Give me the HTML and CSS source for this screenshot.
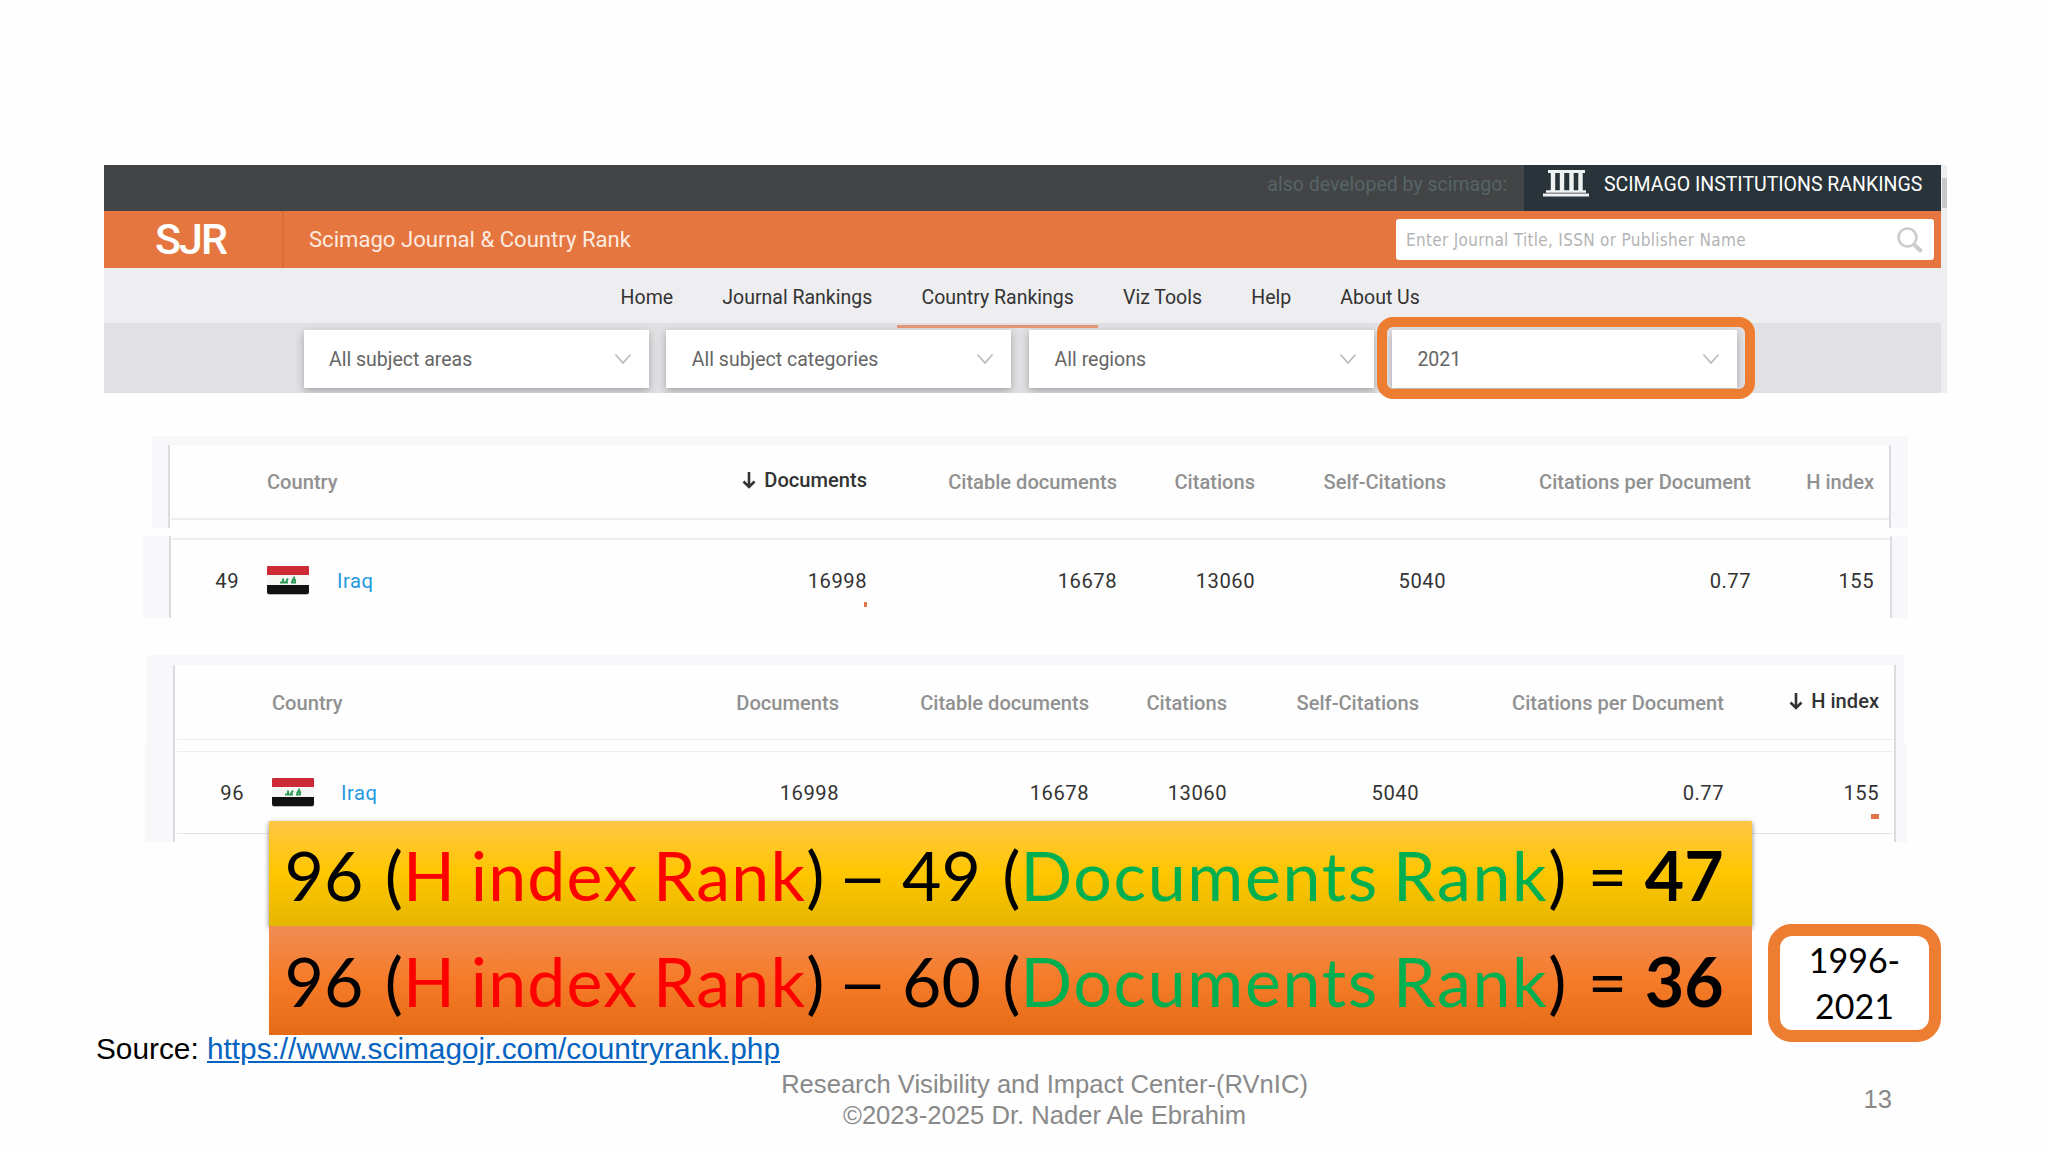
FILE: index.html
```html
<!DOCTYPE html>
<html>
<head>
    <meta charset="UTF-8">
    <title>Scimago Journal &amp; Country Rank</title>
    <link rel="stylesheet" href="styles.css">
</head>
<body>
<div class="slide">
    <!-- site header -->
    <div class="site">
        <div class="topbar">
            <span class="also">also developed by scimago:</span>
            <div class="sir">
                <svg class="sir-icon" width="46" height="27" viewBox="0 0 46 27">
                    <path d="M5 1.500h37M0 25h46" stroke="#eef2f3" stroke-width="3" fill="none"/>
                    <path d="M3 21.500h40" stroke="#eef2f3" stroke-width="2.400" fill="none"/>
                    <path d="M10 3v18M19 3v18M28.500 3v18M37.500 3v18" stroke="#eef2f3" stroke-width="4.400" fill="none"/>
                </svg>
                <span>SCIMAGO INSTITUTIONS RANKINGS</span>
            </div>
        </div>
        <div class="brand">
            <div class="logo">SJR</div>
            <div class="brand-name">Scimago Journal &amp; Country Rank</div>
            <div class="search">
                <span>Enter Journal Title, ISSN or Publisher Name</span>
                <svg width="28" height="26" viewBox="0 0 28 26">
                    <circle cx="11.500" cy="10.500" r="9" fill="none" stroke="#ccc" stroke-width="2.600"/>
                    <path d="M17.500 17l8 7.500" stroke="#ccc" stroke-width="4"/>
                </svg>
            </div>
        </div>
        <div class="nav">
            <a>Home</a>
            <a>Journal Rankings</a>
            <a class="active">Country Rankings</a>
            <a>Viz Tools</a>
            <a>Help</a>
            <a>About Us</a>
        </div>
        <div class="filters">
            <div class="select"><span>All subject areas</span><svg width="18" height="12" viewBox="0 0 18 12"><path d="M1.500 1.500l7.500 8.500 7.500-8.500"/></svg></div>
            <div class="select"><span>All subject categories</span><svg width="18" height="12" viewBox="0 0 18 12"><path d="M1.500 1.500l7.500 8.500 7.500-8.500"/></svg></div>
            <div class="select"><span>All regions</span><svg width="18" height="12" viewBox="0 0 18 12"><path d="M1.500 1.500l7.500 8.500 7.500-8.500"/></svg></div>
            <div class="select"><span>2021</span><svg width="18" height="12" viewBox="0 0 18 12"><path d="M1.500 1.500l7.500 8.500 7.500-8.500"/></svg></div>
        </div>
        <div class="scrollbar"></div>
        <div class="mark-year"></div>
    </div>

    <!-- sorted by documents -->
    <div class="strip head-docs">
        <div class="sheet cols">
            <span></span><span class="left">Country</span><span></span>
            <span class="sorted"><svg width="14" height="18" viewBox="0 0 14 18"><path d="M7 1v15M1.500 10.500l5.500 5.500 5.500-5.500"/></svg>Documents</span>
            <span>Citable documents</span><span>Citations</span><span>Self-Citations</span><span>Citations per Document</span><span>H index</span>
        </div>
    </div>
    <div class="strip row-docs">
        <div class="sheet cols">
            <span>49</span>
            <span class="left"><svg class="flag" width="42" height="29" viewBox="0 0 42 29"><rect y="1" width="42" height="28" rx="2" fill="#bbb"/><rect width="42" height="28" rx="2" fill="#111"/><path d="M0 10V2q0-2 2-2h38q2 0 2 2v8z" fill="#cd2a35"/><path d="M0 9h42v10H0z" fill="#f6f6f4"/><path d="M13 16.500h8M16 15.500v-3M19 15.500l2-3M24 16.500h5M25 15.500l2-3.500 1.500 3.500" stroke="#2c9c58" stroke-width="2" fill="none"/></svg></span>
            <span class="left country">Iraq</span>
            <span>16998<i class="bar"></i></span><span>16678</span><span>13060</span><span>5040</span><span>0.77</span><span>155</span>
        </div>
    </div>

    <!-- sorted by h index -->
    <div class="strip head-h">
        <div class="sheet cols cols-h">
            <span></span><span class="left">Country</span><span></span>
            <span>Documents</span><span>Citable documents</span><span>Citations</span><span>Self-Citations</span><span>Citations per Document</span>
            <span class="sorted"><svg width="14" height="18" viewBox="0 0 14 18"><path d="M7 1v15M1.500 10.500l5.500 5.500 5.500-5.500"/></svg>H index</span>
        </div>
    </div>
    <div class="strip row-h">
        <div class="sheet cols cols-h">
            <span>96</span>
            <span class="left"><svg class="flag" width="42" height="29" viewBox="0 0 42 29"><rect y="1" width="42" height="28" rx="2" fill="#bbb"/><rect width="42" height="28" rx="2" fill="#111"/><path d="M0 10V2q0-2 2-2h38q2 0 2 2v8z" fill="#cd2a35"/><path d="M0 9h42v10H0z" fill="#f6f6f4"/><path d="M13 16.500h8M16 15.500v-3M19 15.500l2-3M24 16.500h5M25 15.500l2-3.500 1.500 3.500" stroke="#2c9c58" stroke-width="2" fill="none"/></svg></span>
            <span class="left country">Iraq</span>
            <span>16998</span><span>16678</span><span>13060</span><span>5040</span><span>0.77</span><span>155<i class="bar bar-h"></i></span>
        </div>
    </div>

    <!-- rank differences, laid over the last table row -->
    <div class="formulas">
        <div class="formula gold"><p>96 (<em>H index Rank</em>)<i class="dash"> – </i>49 (<u>Documents Rank</u>) = <strong>47</strong></p></div>
        <div class="formula orange"><p>96 (<em>H index Rank</em>)<i class="dash"> – </i>60 (<u>Documents Rank</u>) = <strong>36</strong></p></div>
    </div>
    <div class="years">1996-<br>2021</div>

    <p class="source">Source: <a href="https://www.scimagojr.com/countryrank.php">https://www.scimagojr.com/countryrank.php</a></p>
    <div class="footer">
        <p>Research Visibility and Impact Center-(RVnIC)<br>©2023-2025 Dr. Nader Ale Ebrahim</p>
        <span class="page">13</span>
    </div>
</div>
</body>
</html>
```
FILE: styles.css
```css
* {
    margin: 0;
    padding: 0;
    box-sizing: border-box;
}
body {
    background: #fefefe;
    font-family: Roboto, "Liberation Sans", sans-serif;
}
.slide {
    position: relative;
    width: 2048px;
    height: 1152px;
    padding-top: 165px;
    overflow: hidden;
}

/* site header */
.site {
    position: relative;
    width: 1843px;
    height: 228px;
    margin-left: 104px;
    padding-right: 6px;
    background: #eeeef0;
    font-size: 19.5px;
    color: #333;
}
.topbar {
    display: flex;
    justify-content: flex-end;
    height: 46px;
    background: #424446;
    line-height: 39px;
}
.also {
    padding-right: 17px;
    color: #566466;
}
.sir {
    display: flex;
    width: 417px;
    padding-left: 19px;
    background: #28343a;
    color: #fff;
}
.sir-icon {
    margin: 5px 15px 0 0;
}
.brand {
    display: flex;
    align-items: center;
    height: 57px;
    background: #e5763f;
    color: #fff;
}
.logo {
    width: 180px;
    height: 57px;
    padding-left: 51px;
    border-right: 2px solid #d96c38;
    font: 500 43px/56px Roboto, sans-serif;
    letter-spacing: -2px;
}
.brand-name {
    flex: 1;
    padding: 0 0 2px 25px;
    font-size: 22.1px;
    color: #fdebe0;
}
.search {
    display: flex;
    justify-content: space-between;
    align-items: center;
    width: 538px;
    height: 41px;
    margin-right: 7px;
    padding: 0 10px 0 10px;
    border-radius: 3px;
    background: #fff;
    font: 17px "DejaVu Sans Condensed", "DejaVu Sans", sans-serif;
    letter-spacing: .3px;
    color: #b4b4b4;
}
.nav {
    display: flex;
    height: 55px;
    padding: 4px 0 0 492px;
    line-height: 51px;
}
.nav a {
    height: 56px;
    padding: 0 24.6px;
}
.nav .active {
    position: relative;
    z-index: 1;
    border-bottom: 3px solid #e39478;
}
.filters {
    display: flex;
    gap: 17.8px;
    height: 70px;
    padding: 7px 0 0 199.5px;
    background: #e1e1e3;
    overflow: hidden;
}
.select {
    display: flex;
    justify-content: space-between;
    align-items: center;
    width: 345px;
    height: 58px;
    padding: 0 17px 0 25.5px;
    background: #fff;
    box-shadow: 0 3px 8px rgba(60, 50, 60, .35);
    color: #666;
}
.select svg path {
    fill: none;
    stroke: #bbb;
    stroke-width: 1.8;
}
.scrollbar {
    position: absolute;
    right: 0;
    top: 13px;
    width: 5px;
    height: 30px;
    background: #c8c8ca;
}
.mark-year {
    position: absolute;
    left: 1273px;
    top: 152px;
    width: 378px;
    height: 82px;
    border: 10px solid #ed7d31;
    border-radius: 16px;
}

/* ranking tables */
.strip {
    background: #f8f8fb;
    color: #333;
}
.sheet {
    height: 100%;
    background: #fefefe;
    border: solid #dcdce0;
    border-width: 0 2px;
}
.cols {
    display: grid;
    grid-template-columns: 68px 98px 530px 0 250px 138px 191px 305px 123px;
    align-items: center;
    text-align: right;
}
.cols-h {
    grid-template-columns: 68px 97px 498px 0 250px 138px 192px 305px 155px;
    padding-left: 1px;
}
.cols span {
    display: flex;
    position: relative;
    justify-content: flex-end;
    align-items: center;
    white-space: nowrap;
}
.cols .left {
    justify-content: flex-start;
}
.cols .left:nth-child(2) {
    padding-left: 28px;
}
.cols .country {
    color: #1f9ae0;
}
.flag {
    margin-top: -2px;
}
.cols .sorted {
    top: -2px;
    color: #333;
}
.sorted svg {
    flex-shrink: 0;
    margin: 0 8px 0 0;
}
.sorted path {
    fill: none;
    stroke: #333;
    stroke-width: 2.6;
}
.bar {
    position: absolute;
    right: 0;
    bottom: -14px;
    width: 3px;
    height: 5px;
    background: #e2754a;
}
.bar-h {
    width: 8px;
}
.head-docs, .head-h {
    font-size: 20.1px;
    font-weight: 500;
    color: #919191;
}
.row-docs, .row-h {
    font-size: 20.2px;
    letter-spacing: .5px;
}
.head-docs {
    width: 1756px;
    height: 92px;
    margin: 43px 0 0 152px;
    padding: 9px 17px 0 16px;
}
.head-docs .sheet {
    padding: 0 0 9px 1px;
    background: linear-gradient(#eeeef2, #eeeef2) 50% 73px / 1718px 2px no-repeat #fefefe;
}
.row-docs {
    width: 1765px;
    height: 82px;
    margin: 8px 0 0 143px;
    padding: 0 16px 0 26px;
}
.row-docs .sheet {
    padding-top: 8px;
    background: linear-gradient(#eeeef2, #eeeef2) 50% 2px / 1718px 2px no-repeat #fefefe;
}
.head-h {
    width: 1757px;
    height: 88px;
    margin: 37px 0 0 147px;
    padding: 10px 8px 0 26px;
}
.head-h .sheet {
    padding-bottom: 2px;
    background: linear-gradient(#eeeef2, #eeeef2) 50% 74px / 1716px 1px no-repeat #fefefe;
}
.row-h {
    width: 1762px;
    height: 99px;
    margin-left: 145px;
    padding: 0 11px 0 28px;
}
.row-h .sheet {
    padding-top: 1px;
    background: linear-gradient(#eeeef2, #eeeef2) 50% 8px / 1716px 1px no-repeat, linear-gradient(#e4e4e8, #e4e4e8) 50% 90px / 1716px 1px no-repeat #fefefe;
}

/* rank differences */
.formulas {
    position: absolute;
    left: 269px;
    top: 821px;
    width: 1483px;
    font: 68px Lato, "Liberation Sans", sans-serif;
    word-spacing: 4px;
    color: #000;
}
.formula {
    height: 109px;
    padding-left: 15.5px;
    line-height: 108px;
    white-space: nowrap;
}
.formula em {
    font-style: normal;
    letter-spacing: 1.2px;
    word-spacing: -4px;
    color: #f00;
}
.formula u {
    text-decoration: none;
    letter-spacing: 1.7px;
    word-spacing: -5px;
    color: #00b050;
}
.formula .dash {
    display: inline-block;
    margin: 0 8.2px;
    font-style: normal;
    white-space: pre;
    word-spacing: -6.5px;
    transform: scaleX(1.3);
}
.formula strong {
    margin-left: -4px;
}
.gold {
    height: 105px;
    background: linear-gradient(#ffc746, #ffc600 50%, #e5b600);
    box-shadow: 0 2px 5px rgba(0, 0, 0, .5);
}
.orange {
    position: relative;
    line-height: 109px;
    background: linear-gradient(#f18c55, #f67b28 50%, #e56b17);
}
.years {
    position: absolute;
    left: 1768px;
    top: 924px;
    width: 173px;
    height: 118px;
    padding-top: 1px;
    border: 12.5px solid #ed7d31;
    border-radius: 24px;
    background: #fff;
    font: 34px/46px Lato, "Liberation Sans", sans-serif;
    text-align: center;
}

/* source and footer */
.source {
    margin: 190px 0 0 96px;
    font: 29.8px/34px "Liberation Sans", Arial, sans-serif;
}
.source a {
    color: #0563c1;
}
.footer {
    display: flex;
    justify-content: flex-end;
    margin-top: 3px;
    font: 25.6px/31px "Liberation Sans", Arial, sans-serif;
    color: #898989;
    text-align: center;
}
.footer p {
    width: 600px;
    margin-right: 519px;
}
.page {
    margin: 15px 156px 0 0;
}
```
